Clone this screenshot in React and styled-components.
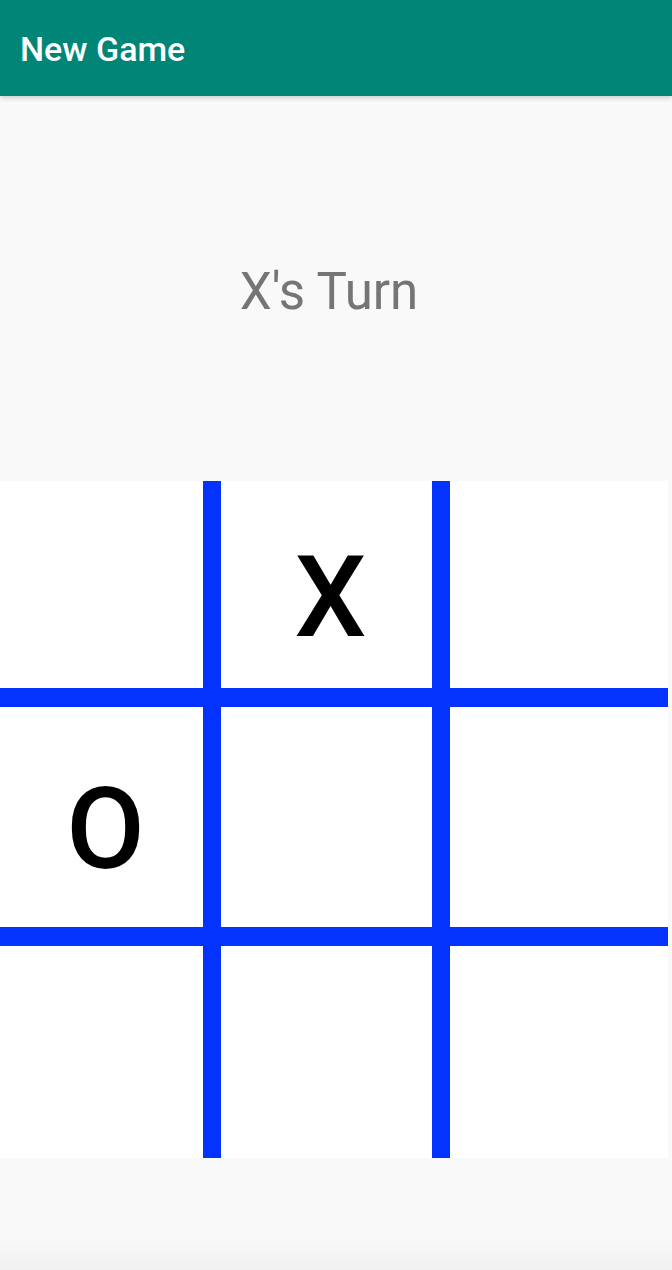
import React from 'react';
import styled, { createGlobalStyle } from 'styled-components';

const GlobalStyle = createGlobalStyle`
  html, body {
    margin: 0;
    padding: 0;
    background: #f9f9f9;
  }
  * { box-sizing: border-box; }
`

const Screen = styled.div`
  width: 672px;
  height: 1270px;
  display: flex;
  flex-direction: column;
  background: #f9f9f9;
  font-family: Roboto, "Liberation Sans", sans-serif;
  overflow: hidden;
`

const AppBar = styled.header`
  position: relative;
  z-index: 1;
  height: 96px;
  flex: none;
  display: flex;
  align-items: center;
  padding-left: 20px;
  padding-top: 2px;
  background: #008577;
  color: #fff;
  font-size: 34px;
  font-weight: 500;
  box-shadow: 0 2px 5px rgba(0, 0, 0, 0.18);
`

const Status = styled.div`
  height: 385px;
  flex: none;
  display: flex;
  align-items: center;
  justify-content: center;
  color: #757575;
  font-size: 51px;
  padding-top: 6px;
  padding-right: 14px;
`

const Board = styled.div`
  flex: none;
  width: 668px;
  height: 677px;
  display: grid;
  grid-template-columns: 203px 211px 218px;
  grid-template-rows: 207px 220px 212px;
  column-gap: 18px;
  row-gap: 19px;
  background: #0433ff;
`

const Cell = styled.button`
  border: none;
  padding: 0;
  margin: 0;
  background: #fff;
  display: flex;
  align-items: center;
  justify-content: center;
  font-family: Roboto, "Liberation Sans", sans-serif;
  font-size: 114px;
  font-weight: 500;
  color: #000;
  line-height: 1;
  padding-top: ${props => props.mark ? '24px' : '0'};
  padding-left: ${props => props.mark ? '8px' : '0'};
  cursor: pointer;
`

const Footer = styled.div`
  flex: 1;
  background: linear-gradient(to bottom, #f9f9f9 0%, #f9f9f9 70%, #f1f1f1 100%);
`

const cells = ['', 'X', '', 'O', '', '', '', '', ''];

export default function App() {
  return (
    <Screen>
      <GlobalStyle />
      <AppBar>New Game</AppBar>
      <Status>X's Turn</Status>
      <Board>
        {cells.map((mark, i) => (
          <Cell key={i} mark={mark}>{mark}</Cell>
        ))}
      </Board>
      <Footer />
    </Screen>
  );
}
